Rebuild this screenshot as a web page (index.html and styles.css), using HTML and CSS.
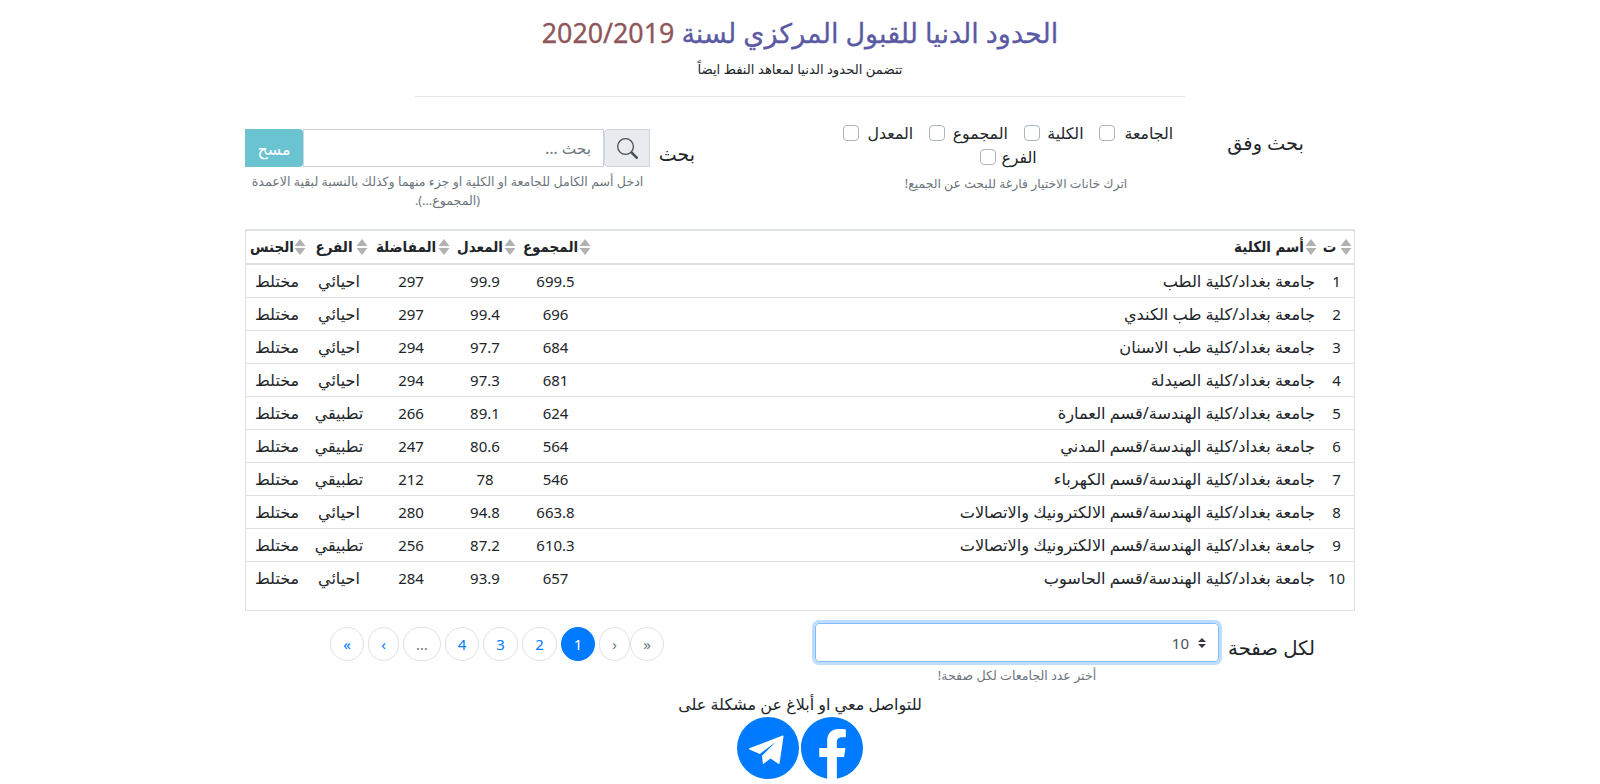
FILE: index.html
```
<!DOCTYPE html>
<html lang="ar" dir="rtl">
<head>
<meta charset="utf-8">
<title>الحدود الدنيا للقبول المركزي</title>
<link rel="stylesheet" href="styles.css">
</head>
<body>
<main class="container">
  <header class="head">
    <h1 class="title">الحدود الدنيا للقبول المركزي لسنة <span class="year">2020/2019</span></h1>
    <p class="subtitle">تتضمن الحدود الدنيا لمعاهد النفط ايضاً</p>
    <hr class="rule">
  </header>

  <section class="filters">
    <div class="label label-by">بحث وفق</div>
    <div class="checks-col">
      <div class="checks">
        <label class="check c1"><span>الجامعة</span><i class="box"></i></label>
        <label class="check c2"><span>الكلية</span><i class="box"></i></label>
        <label class="check c3"><span>المجموع</span><i class="box"></i></label>
        <label class="check c4"><span>المعدل</span><i class="box"></i></label>
      </div>
      <div class="checks checks-last">
        <label class="check c5"><span>الفرع</span><i class="box"></i></label>
      </div>
      <small class="hint hint-checks">اترك خانات الاختيار فارغة للبحث عن الجميع!</small>
    </div>
    <div class="label label-search">بحث</div>
    <div class="search-col">
      <div class="group">
        <span class="addon"><svg width="21" height="21" viewBox="0 0 16 16" fill="currentColor"><path d="M10.442 10.442a1 1 0 0 1 1.415 0l3.85 3.85a1 1 0 0 1-1.414 1.415l-3.85-3.85a1 1 0 0 1 0-1.415z"/><path d="M6.5 12a5.5 5.5 0 1 0 0-11 5.5 5.5 0 0 0 0 11zM13 6.5a6.5 6.5 0 1 1-13 0 6.5 6.5 0 0 1 13 0z"/></svg></span>
        <span class="input">بحث ...</span>
        <span class="clear">مسح</span>
      </div>
      <small class="hint hint-search"><span>ادخل أسم الكامل للجامعة او الكلية او جزء منهما وكذلك بالنسبة لبقية الاعمدة</span><br>(المجموع...).</small>
    </div>
  </section>

  <div class="table-wrap">
    <table class="table">
      <colgroup><col class="w-num"><col><col class="w-total"><col class="w-avg"><col class="w-pref"><col class="w-branch"><col class="w-sex"></colgroup>
      <thead><tr><th>ت</th><th class="name">أسم الكلية</th><th>المجموع</th><th>المعدل</th><th>المفاضلة</th><th>الفرع</th><th>الجنس</th></tr></thead>
      <tbody>
        <tr><td>1</td><td class="name">جامعة بغداد/كلية الطب</td><td>699.5</td><td>99.9</td><td>297</td><td class="ar">احيائي</td><td class="ar">مختلط</td></tr>
        <tr><td>2</td><td class="name">جامعة بغداد/كلية طب الكندي</td><td>696</td><td>99.4</td><td>297</td><td class="ar">احيائي</td><td class="ar">مختلط</td></tr>
        <tr><td>3</td><td class="name">جامعة بغداد/كلية طب الاسنان</td><td>684</td><td>97.7</td><td>294</td><td class="ar">احيائي</td><td class="ar">مختلط</td></tr>
        <tr><td>4</td><td class="name">جامعة بغداد/كلية الصيدلة</td><td>681</td><td>97.3</td><td>294</td><td class="ar">احيائي</td><td class="ar">مختلط</td></tr>
        <tr><td>5</td><td class="name">جامعة بغداد/كلية الهندسة/قسم العمارة</td><td>624</td><td>89.1</td><td>266</td><td class="ar">تطبيقي</td><td class="ar">مختلط</td></tr>
        <tr><td>6</td><td class="name">جامعة بغداد/كلية الهندسة/قسم المدني</td><td>564</td><td>80.6</td><td>247</td><td class="ar">تطبيقي</td><td class="ar">مختلط</td></tr>
        <tr><td>7</td><td class="name">جامعة بغداد/كلية الهندسة/قسم الكهرباء</td><td>546</td><td>78</td><td>212</td><td class="ar">تطبيقي</td><td class="ar">مختلط</td></tr>
        <tr><td>8</td><td class="name">جامعة بغداد/كلية الهندسة/قسم الالكترونيك والاتصالات</td><td>663.8</td><td>94.8</td><td>280</td><td class="ar">احيائي</td><td class="ar">مختلط</td></tr>
        <tr><td>9</td><td class="name">جامعة بغداد/كلية الهندسة/قسم الالكترونيك والاتصالات</td><td>610.3</td><td>87.2</td><td>256</td><td class="ar">تطبيقي</td><td class="ar">مختلط</td></tr>
        <tr><td>10</td><td class="name">جامعة بغداد/كلية الهندسة/قسم الحاسوب</td><td>657</td><td>93.9</td><td>284</td><td class="ar">احيائي</td><td class="ar">مختلط</td></tr>
      </tbody>
    </table>
  </div>

  <section class="bottom">
    <div class="label label-per">لكل صفحة</div>
    <div class="per-col">
      <div class="select"><svg width="8" height="10" viewBox="0 0 4 5"><path fill="#343a40" d="M2 0 0 2h4zm0 5L0 3h4z"/></svg><span>10</span></div>
      <small class="hint hint-per">أختر عدد الجامعات لكل صفحة!</small>
    </div>
    <nav class="pages" dir="ltr">
      <a class="page">«</a><a class="page narrow">‹</a><a class="page dots">…</a><a class="page">4</a><a class="page mid">3</a><a class="page mid">2</a><a class="page active">1</a><a class="page narrow off">›</a><a class="page off last">»</a>
    </nav>
  </section>

  <footer class="foot">
    <p class="contact">للتواصل معي او أبلاغ عن مشكلة على</p>
    <div class="social">
      <svg width="62" height="62" viewBox="8 8 496 496"><path fill="#007bff" d="M504 256C504 119 393 8 256 8S8 119 8 256c0 123.78 90.69 226.38 209.25 245V327.69h-63V256h63v-54.64c0-62.15 37-96.48 93.67-96.48 27.14 0 55.52 4.84 55.52 4.84v61h-31.28c-30.8 0-40.41 19.12-40.41 38.73V256h68.78l-11 71.69h-57.78V501C413.31 482.38 504 379.78 504 256z"/></svg>
      <svg width="62" height="62" viewBox="0 0 62 62"><circle cx="31" cy="31" r="31" fill="#007bff"/><path fill="#fff" d="M12.3 31.3 45.6 18.6q1-.3.9.8L42.6 46q-.3 1.3-1.3.7L33.5 41.5 26.6 46.8q-.7.4-.8-.5L25 38.8 38.8 25 22.8 37 12.5 32.4q-.9-.6-.2-1.1z"/></svg>
    </div>
  </footer>
</main>
</body>
</html>
```
FILE: styles.css
```
* { box-sizing: border-box; }
body {
  margin: 0;
  height: 784px;
  overflow: hidden;
  background: #fff;
  color: #212529;
  font: 16px/24px "Noto Sans", "DejaVu Sans", sans-serif;
}
h1, p { margin: 0; font-weight: 400; }
.container { width: 1110px; margin: 0 auto; }
.head, .filters { white-space: nowrap; }

.head { display: flex; flex-direction: column; align-items: center; padding-top: 11px; height: 124px; }
.title { height: 44px; line-height: 44px; font-size: 27px; color: #5a5aa3; -webkit-text-stroke: .3px; }
.year { color: #8d565b; font-size: 26.8px; }
.subtitle { margin-top: 2px; height: 24px; line-height: 24px; font-size: 13.2px; }
.rule { width: 770px; margin: 15px 0 0; border: 0; border-top: 1px solid #e5e5e5; }

.label { font-size: 20px; line-height: 30px; text-align: center; white-space: nowrap; }
.filters { display: flex; height: 105px; padding-right: 27px; }
.label-by { width: 128px; padding: 4px 0 0 3px; font-size: 19.4px; }
.label-search { width: 52px; margin-right: 129px; padding-top: 15px; font-size: 19px; }
.checks-col { width: 369px; text-align: center; }
.checks { display: flex; justify-content: space-between; width: 330px; height: 24px; margin-right: 27px; margin-top: -3px; }
.checks-last { justify-content: center; margin-top: 0; }
.check { display: flex; justify-content: space-between; align-items: center; font-size: 15.8px; }
.check span { line-height: 24px; }
.c1 { width: 74px; } .c2 { width: 60px; } .c3 { width: 79px; } .c4 { width: 70px; } .c5 { width: 57px; }
.box { width: 16px; height: 16px; border: 1px solid #adb5bd; border-radius: 4px; background: #fff; }
.hint { display: block; font-size: 12.6px; line-height: 19.2px; color: #6c757d; text-align: center; }
.hint-checks { margin-top: 5px; font-size: 12.4px; }
.search-col { width: 405px; margin-right: 1px; padding-top: 5px; }
.group { display: flex; height: 38px; }
.addon { width: 46px; display: flex; align-items: center; justify-content: center; background: #e9ecef; border: 1px solid #ced4da; border-radius: 4px 0 0 4px; color: #495057; }
.input { width: 301px; border: 1px solid #ced4da; padding: 6px 12px; line-height: 26px; color: #6c757d; font-size: 15.4px; }
.clear { width: 58px; background: #6ac3d1; border-radius: 0 4px 4px 0; color: #fff; text-align: center; line-height: 41px; }
.hint-search { margin-top: 5px; }

.table-wrap { height: 382px; border: solid #dee2e6; border-width: 0 1px 1px; }
.table { width: 100%; table-layout: fixed; border-spacing: 0; border-collapse: separate; }
.w-num { width: 35px; } .w-total { width: 75px; } .w-avg { width: 66px; }
.w-pref { width: 82px; } .w-branch { width: 62px; } .w-sex { width: 62px; }
.table th, .table td { padding: 0; text-align: center; white-space: nowrap; }
.table th {
  height: 36px;
  border: solid #dee2e6;
  border-width: 2px 0;
  padding-right: 10px;
  font: bold 15px/32px "DejaVu Sans Condensed", "DejaVu Sans", sans-serif;
  background: url("data:image/svg+xml,%3Csvg xmlns='http://www.w3.org/2000/svg' width='12' height='16' viewBox='0 0 12 16'%3E%3Cpath fill='%23b2b2b2' d='M6 0 11.5 7H.5zM6 16 .5 9h11z'/%3E%3C/svg%3E") no-repeat right 2px center;
}
.table th:first-child { padding-right: 14px; }
.table td { height: 33px; border-top: 1px solid #dee2e6; font-size: 15px; line-height: 32px; }
.table tbody tr:first-child td { height: 32px; border-top: 0; }
.table td.ar { font-size: 16px; }
.table .name { text-align: right; padding-right: 4px; }
.table td.name { font-size: 16.2px; }
.table th.name { padding-right: 15px; }

.bottom { display: flex; height: 80px; padding: 12px 40px 0 0; white-space: nowrap; }
.label-per { width: 87px; padding-top: 10px; font-size: 19.7px; }
.per-col { width: 404px; margin-right: 9px; }
.select { height: 39px; border: 1px solid #80bdff; border-radius: 4px; box-shadow: 0 0 0 3px #bfdeff; display: flex; align-items: center; gap: 9px; padding-right: 12px; color: #495057; font-size: 15px; }
.hint-per { margin-top: 4px; }
.pages { display: flex; margin: 4px 151px 0 0; height: 34px; }
.page { width: 34px; height: 34px; margin-right: 4px; flex: none; border: 1px solid #dee2e6; border-radius: 17px; color: #007bff; text-align: center; line-height: 32px; font-size: 15px; }
.mid { width: 35px; }
.narrow { width: 31px; }
.dots { width: 38px; color: #6c757d; }
.off { color: #6c757d; }
.narrow.off, .last { margin-right: 0; }
.active { background: #007bff; border-color: #007bff; color: #fff; }

.foot { display: flex; flex-direction: column; align-items: center; }
.contact { height: 26px; line-height: 26px; }
.social { display: flex; gap: 2px; }
```
